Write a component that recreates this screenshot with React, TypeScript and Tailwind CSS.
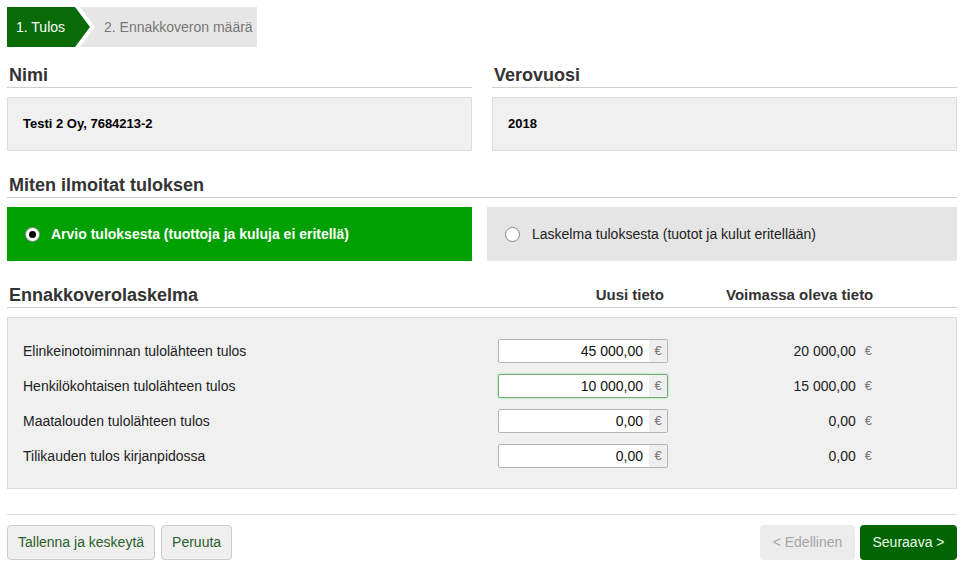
import React from "react";

const rows = [
  { label: "Elinkeinotoiminnan tulolähteen tulos", value: "45 000,00", current: "20 000,00" },
  { label: "Henkilökohtaisen tulolähteen tulos", value: "10 000,00", current: "15 000,00", focused: true },
  { label: "Maatalouden tulolähteen tulos", value: "0,00", current: "0,00" },
  { label: "Tilikauden tulos kirjanpidossa", value: "0,00", current: "0,00" },
];

function Heading({ children }: { children: React.ReactNode }) {
  return (
    <h2 className="border-b border-[#cfcfcf] pb-[2px] pl-[2px] text-[18px] leading-[20px] font-bold text-[#333]">
      {children}
    </h2>
  );
}

function Radio({ checked }: { checked?: boolean }) {
  return (
    <span className="flex h-[15px] w-[15px] shrink-0 items-center justify-center rounded-full border border-[#888] bg-white">
      {checked && <span className="h-[7px] w-[7px] rounded-full bg-black" />}
    </span>
  );
}

export default function App() {
  return (
    <div className="min-h-[574px] bg-white px-[7px] pt-[7px] font-['Liberation_Sans',Arial,sans-serif] text-[#222]">
      <div className="w-[950px]">
        {/* stepper */}
        <div className="relative flex h-[40px] w-[250px] items-center bg-[#e6e6e6] text-[14px]">
          <div className="flex h-full w-[68px] items-center bg-[#086b08] pl-[9px] text-white">1. Tulos</div>
          <svg className="absolute top-0 left-[68px]" width="24" height="40" viewBox="0 0 24 40">
            <polygon points="0,0 5,0 20,20 5,40 0,40" fill="#ffffff" />
            <polygon points="0,0 15,20 0,40" fill="#086b08" />
          </svg>
          <div className="pl-[29px] text-[#777]">2. Ennakkoveron määrä</div>
        </div>

        {/* name & year */}
        <div className="mt-[18px] grid grid-cols-2 gap-x-[20px]">
          <div>
            <Heading>Nimi</Heading>
            <div className="mt-[9px] flex h-[54px] items-center border border-[#dcdcdc] bg-[#f0f0f0] pl-[15px] text-[13px] font-bold text-black">
              Testi 2 Oy, 7684213-2
            </div>
          </div>
          <div>
            <Heading>Verovuosi</Heading>
            <div className="mt-[9px] flex h-[54px] items-center border border-[#dcdcdc] bg-[#f0f0f0] pl-[15px] text-[13px] font-bold text-black">
              2018
            </div>
          </div>
        </div>

        {/* choice */}
        <div className="mt-[24px]">
          <Heading>Miten ilmoitat tuloksen</Heading>
          <div className="mt-[9px] flex gap-[15px]">
            <div className="flex h-[54px] w-[465px] items-center gap-[11px] bg-[#00a000] pl-[18px] text-[14px] font-bold text-white">
              <Radio checked />
              Arvio tuloksesta (tuottoja ja kuluja ei eritellä)
            </div>
            <div className="flex h-[54px] flex-1 items-center gap-[12px] bg-[#e5e5e5] pl-[18px] text-[14px] text-[#222]">
              <Radio />
              Laskelma tuloksesta (tuotot ja kulut eritellään)
            </div>
          </div>
        </div>

        {/* calculation */}
        <div className="mt-[24px]">
          <div className="flex items-end border-b border-[#cfcfcf] pb-[2px] text-[#333]">
            <h2 className="w-[491px] pl-[2px] text-[18px] leading-[20px] font-bold">Ennakkoverolaskelma</h2>
            <div className="w-[170px] pr-[4px] text-right text-[15px] leading-[20px] font-bold">Uusi tieto</div>
            <div className="ml-[58px] text-[15px] leading-[20px] font-bold">Voimassa oleva tieto</div>
          </div>
          <div className="mt-[9px] flex flex-col gap-[11px] border border-[#dcdcdc] bg-[#f0f0f0] pt-[21px] pb-[20px] pl-[15px]">
            {rows.map((r) => (
              <div key={r.label} className="flex h-[24px] items-center text-[14px]">
                <div className="w-[475px] text-[#222]">{r.label}</div>
                <div
                  className={
                    r.focused
                      ? "flex h-[24px] w-[170px] items-stretch rounded-[2px] border border-[#6cb26c] bg-white shadow-[0_0_2px_#8fd18f]"
                      : "flex h-[24px] w-[170px] items-stretch rounded-[2px] border border-[#b5b5b5] bg-white"
                  }
                >
                  <div className="flex flex-1 items-center justify-end pr-[6px] text-[#111]">{r.value}</div>
                  <div className="flex w-[18px] items-center justify-center bg-[#efefef] text-[13px] text-[#777]">€</div>
                </div>
                <div className="flex w-[204px] items-center justify-end text-[#222]">
                  {r.current}
                  <span className="ml-[9px] text-[13px] text-[#777]">€</span>
                </div>
              </div>
            ))}
          </div>
        </div>

        {/* footer */}
        <div className="mt-[25px] flex items-center justify-between border-t border-[#dcdcdc] pt-[10px] text-[14px]">
          <div className="flex gap-[6px]">
            <button className="h-[35px] rounded-[4px] border border-[#cccccc] bg-[#efefef] px-[10px] text-[#2b5e2b]">
              Tallenna ja keskeytä
            </button>
            <button className="h-[35px] rounded-[4px] border border-[#cccccc] bg-[#efefef] px-[10px] text-[#2b5e2b]">
              Peruuta
            </button>
          </div>
          <div className="flex gap-[5px]">
            <button className="h-[35px] w-[95px] rounded-[4px] bg-[#ececec] text-[#a5a5a5]">&lt; Edellinen</button>
            <button className="h-[35px] w-[97px] rounded-[4px] bg-[#006400] text-[#e8ffe8]">Seuraava &gt;</button>
          </div>
        </div>
      </div>
    </div>
  );
}
